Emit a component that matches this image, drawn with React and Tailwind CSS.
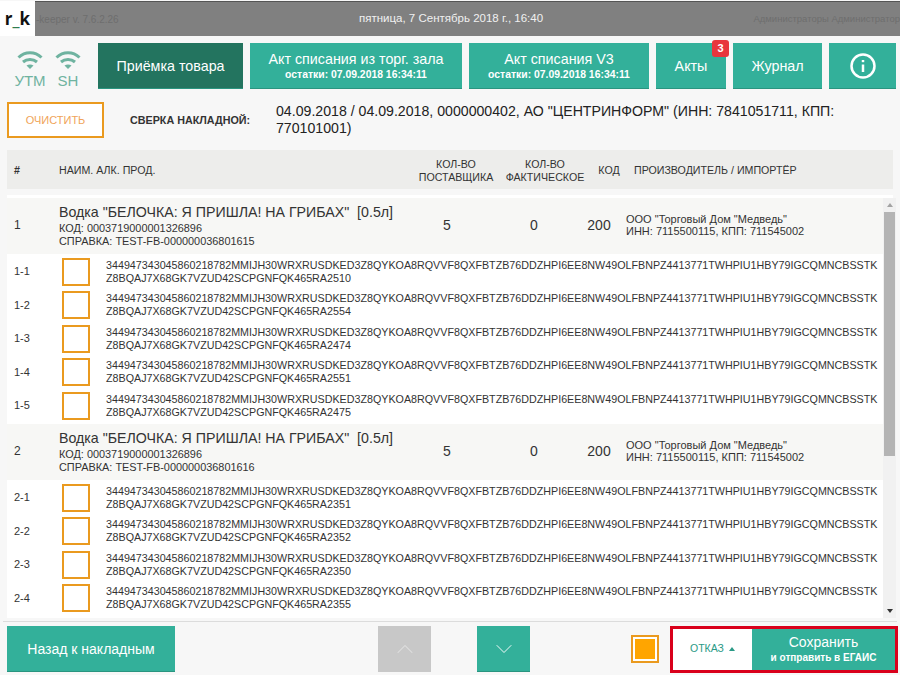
import { ChevronUp, ChevronDown } from 'lucide-react';

const CODE_HEAD = '344947343045860218782MMIJH30WRXRUSDKED3Z8QYKOA8RQVVF8QXFBTZB76DDZHPI6EE8NW49OLFBNPZ4413771TWHPIU1HBY79IGCQMNCBSSTK';

const groups = [
  {
    num: '1',
    sprav: 'TEST-FB-000000036801615',
    kod: '0003719000001326896',
    items: [['1-1', '2510'], ['1-2', '2554'], ['1-3', '2474'], ['1-4', '2551'], ['1-5', '2475']],
  },
  {
    num: '2',
    sprav: 'TEST-FB-000000036801616',
    kod: '0003719000001326896',
    items: [['2-1', '2351'], ['2-2', '2352'], ['2-3', '2350'], ['2-4', '2355']],
  },
];

function Wifi() {
  return (
    <svg width="26" height="20" viewBox="0 0 26 20" fill="none" stroke="#6fb3a0" strokeWidth="3">
      <path d="M1.5 7.5C8 1 18 1 24.5 7.5" />
      <path d="M6 12C10 8.5 16 8.5 20 12" />
      <path d="M9.5 15.5L13 19L16.5 15.5C14.5 14 11.5 14 9.5 15.5Z" fill="#6fb3a0" stroke="none" />
    </svg>
  );
}

function Status({ label }) {
  return (
    <div className="flex w-[38px] flex-col items-center pt-[8px]">
      <Wifi />
      <span className="mt-[2px] text-[15px] leading-[18px] text-[#6fb3a0]">{label}</span>
    </div>
  );
}

function NavButton({ title, sub, className, children }) {
  return (
    <div className={`relative flex h-[46px] flex-col items-center justify-center border-b border-[#2a9580] bg-[#33b09a] text-white ${className}`}>
      <span className="text-[14.3px] leading-[18px]">{title}</span>
      {sub && <span className="text-[10.4px] font-bold leading-[14px]">{sub}</span>}
      {children}
    </div>
  );
}

function InfoIcon() {
  return (
    <svg width="26" height="26" viewBox="0 0 26 26" fill="none" stroke="white" strokeWidth="2.5" className="block">
      <circle cx="13" cy="13" r="11.5" />
      <path d="M13 11.5V19" />
      <path d="M13 7V9.2" />
    </svg>
  );
}

function Check() {
  return <div className="h-[28px] w-[28px] shrink-0 border-2 border-[#ea9a1f] bg-white" />;
}

function ProductRow({ group }) {
  return (
    <div className="flex h-[56px] items-center bg-[#f7f7f5] pb-[2px] text-[#333]">
      <div className="w-[52px] pl-[7px] text-xs">{group.num}</div>
      <div className="w-[343px]">
        <div className="mb-px whitespace-pre text-[14.2px] leading-[18px]">{'Водка "БЕЛОЧКА: Я ПРИШЛА! НА ГРИБАХ"  [0.5л]'}</div>
        <div className="text-[10.9px] leading-[12.5px]">КОД: {group.kod}</div>
        <div className="text-[10.9px] leading-[12.5px]">СПРАВКА: {group.sprav}</div>
      </div>
      <div className="w-[90px] text-center text-sm">5</div>
      <div className="w-[84px] text-center text-sm">0</div>
      <div className="w-[46px] text-center text-sm">200</div>
      <div className="pl-[4px] text-[11px] leading-[12.5px]">
        <div>ООО "Торговый Дом "Медведь"</div>
        <div>ИНН: 7115500115, КПП: 711545002</div>
      </div>
    </div>
  );
}

function CodeRow({ item }) {
  return (
    <div className="flex h-[33.5px] items-center bg-white text-[#333]">
      <div className="w-[55px] pb-px pl-[7px] text-[11px]">{item[0]}</div>
      <Check />
      <div className="ml-[16px] text-[10.73px] leading-[13px]">
        <div>{CODE_HEAD}</div>
        <div>Z8BQAJ7X68GK7VZUD42SCPGNFQK465RA{item[1]}</div>
      </div>
    </div>
  );
}

export default function App() {
  return (
    <div className="flex h-[675px] w-[900px] flex-col overflow-hidden bg-[#f7f7f7] font-['Liberation_Sans',sans-serif]">
      <div className="mt-px flex h-[35px] shrink-0">
        <div className="flex w-[35px] items-center justify-center bg-white font-['Open_Sans',sans-serif] text-[17px] font-bold text-[#111]">
          r<span className="text-[#2e7d4f]">_</span>k
        </div>
        <div className="flex min-w-0 flex-1 items-center border-t border-[#555] bg-[#808080] whitespace-nowrap">
          <span className="w-[90px] shrink-0 pl-px text-[10px] text-[#6e6e6e]">-keeper v. 7.6.2.26</span>
          <span className="ml-[234px] shrink-0 text-[11.5px] text-[#f0f0f0]">пятница, 7 Сентябрь 2018 г., 16:40</span>
          <span className="ml-auto text-[9.5px] text-[#6e6e6e]">Администраторы Администратор</span>
        </div>
      </div>

      <div className="mt-[7px] flex h-[46px] shrink-0 items-center gap-[7px]">
        <div className="ml-[11px] mr-[4px] flex">
          <Status label="УТМ" />
          <Status label="SH" />
        </div>
        <NavButton title="Приёмка товара" className="w-[145px] border-[#1c6352] bg-[#23745f]" />
        <NavButton title="Акт списания из торг. зала" sub="остатки: 07.09.2018 16:34:11" className="w-[212px]" />
        <NavButton title="Акт списания V3" sub="остатки: 07.09.2018 16:34:11" className="w-[180px]" />
        <NavButton title="Акты" className="w-[70px]">
          <div className="absolute right-[-3px] top-[-3px] flex h-[17px] w-[17px] items-center justify-center rounded-[3px] bg-[#e8363d] text-[11px] font-bold text-white">3</div>
        </NavButton>
        <NavButton title="Журнал" className="w-[89px]" />
        <NavButton title={<InfoIcon />} className="w-[67px]" />
      </div>

      <div className="mt-[13px] flex h-[36px] shrink-0 items-center">
        <div className="ml-[7px] flex h-[36px] w-[97px] items-center justify-center border-2 border-[#ea9a1f] bg-white text-[11px] text-[#f0a45a]">
          ОЧИСТИТЬ
        </div>
        <div className="ml-[26px] w-[146px] text-[10.75px] font-bold text-[#333]">СВЕРКА НАКЛАДНОЙ:</div>
        <div className="w-[600px] text-[14.15px] leading-[17.5px] text-[#222]">
          04.09.2018 / 04.09.2018, 0000000402, АО "ЦЕНТРИНФОРМ" (ИНН: 7841051711, КПП: 770101001)
        </div>
      </div>

      <div className="mx-[7px] mt-[12px] flex h-[39px] shrink-0 items-center bg-[#ededeb] pt-[2px] text-[10.65px] leading-[12.5px] text-[#333]">
        <div className="w-[52px] pl-[7px] font-bold">#</div>
        <div className="w-[352px]">НАИМ. АЛК. ПРОД.</div>
        <div className="w-[90px] text-center">КОЛ-ВО<br />ПОСТАВЩИКА</div>
        <div className="w-[88px] text-center">КОЛ-ВО<br />ФАКТИЧЕСКОЕ</div>
        <div className="w-[40px] text-center">КОД</div>
        <div className="pl-[5px]">ПРОИЗВОДИТЕЛЬ / ИМПОРТЁР</div>
      </div>

      <div className="mx-[7px] mt-[6px] h-[3px] shrink-0 bg-white" />

      <div className="ml-[7px] mr-[4px] flex h-[420px] shrink-0 overflow-hidden">
        <div className="min-w-0 flex-1 overflow-hidden bg-white">
          {groups.map((g) => (
            <div key={g.num}>
              <ProductRow group={g} />
              <div className="h-px bg-white" />
              {g.items.map((it) => <CodeRow key={it[0]} item={it} />)}
              {g.num === '1' && <div className="h-[1.5px] bg-white" />}
            </div>
          ))}
        </div>
        <div className="flex w-[13px] shrink-0 flex-col bg-[#f1f1f1]">
          <div className="flex h-[14px] items-center justify-center">
            <div className="h-0 w-0 border-x-[3.5px] border-b-[4px] border-x-transparent border-b-[#a3a3a3]" />
          </div>
          <div className="mx-px h-[244px] bg-[#b4b4b4]" />
          <div className="flex-1" />
          <div className="flex h-[14px] items-center justify-center">
            <div className="h-0 w-0 border-x-[3.5px] border-t-[4px] border-x-transparent border-t-[#333]" />
          </div>
        </div>
      </div>

      <div className="mx-[3px] mt-[3px] h-px shrink-0 bg-[#dcdcdc]" />

      <div className="mt-[4px] flex h-[46px] shrink-0 items-center">
        <div className="ml-[7px] flex h-[46px] w-[168px] items-center justify-center border-b border-[#2a9580] bg-[#33b09a] text-sm text-white">
          Назад к накладным
        </div>
        <div className="ml-[203px] flex h-[46px] w-[53px] items-center justify-center bg-[#c8c8c8] text-[#e0e0e0]">
          <ChevronUp size={28} strokeWidth={0.9} />
        </div>
        <div className="ml-[46px] flex h-[46px] w-[53px] items-center justify-center border-b border-[#2a9580] bg-[#33b09a] text-white">
          <ChevronDown size={28} strokeWidth={0.8} />
        </div>
        <div className="ml-[101px] flex h-[28px] w-[28px] items-center justify-center border-2 border-[#ea9a1f] bg-white">
          <div className="h-[20px] w-[20px] bg-[#ffa500]" />
        </div>
        <div className="ml-[11px] flex h-[47px] w-[228px] border-[3px] border-[#d9001b]">
          <div className="flex w-[79px] items-center justify-center gap-[5px] bg-white text-[10.5px] text-[#2a9a86]">
            ОТКАЗ
            <div className="h-0 w-0 border-x-[3.5px] border-b-[4px] border-x-transparent border-b-[#2a9a86]" />
          </div>
          <div className="flex flex-1 flex-col items-center justify-center bg-[#33b09a] text-white">
            <span className="text-sm leading-[17px]">Сохранить</span>
            <span className="text-[10px] font-bold leading-[13px]">и отправить в ЕГАИС</span>
          </div>
        </div>
      </div>
    </div>
  );
}
